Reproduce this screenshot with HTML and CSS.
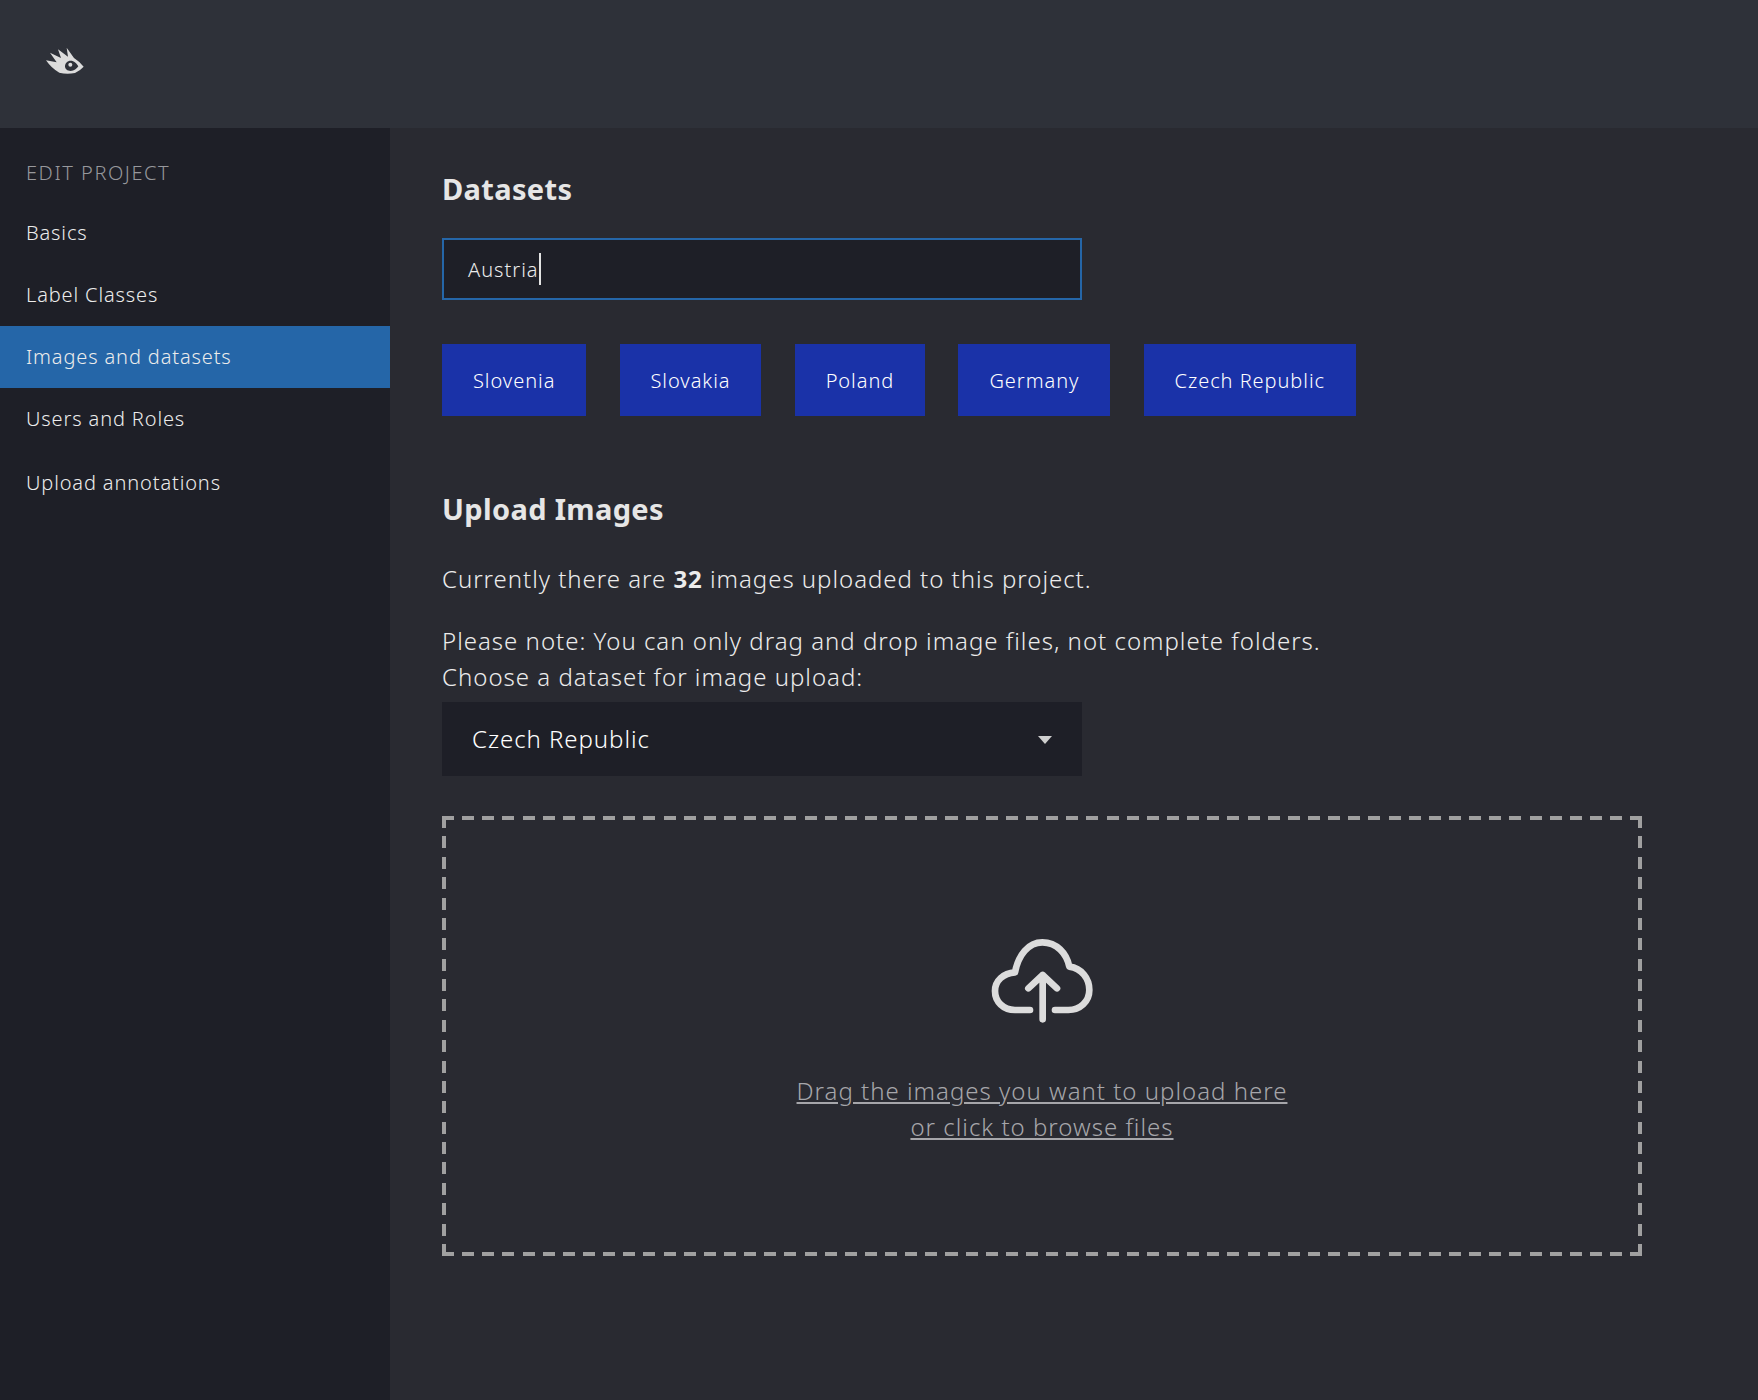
FILE: index.html
```html
<!DOCTYPE html>
<html lang="en">
<head>
<meta charset="utf-8">
<title>Images and datasets</title>
<link rel="stylesheet" href="styles.css">
</head>
<body>
<header class="topbar">
  <svg class="logo" viewBox="0 0 270 180" aria-hidden="true">
    <path fill="#dcdcdc" fill-rule="evenodd" d="M78 97 L110 103 L90 74 L123 90 L114 64 L144 86 L140 59 L162 90 Q178 100 191 116 Q180 128 165 135 Q140 140 118 134 Q95 122 78 97 Z M152 98 C142 98 135 106 135 115 C135 123 142 129 152 129 C162 129 170 123 175 115 C170 106 162 98 152 98 Z"/>
    <circle cx="151" cy="110" r="6" fill="#dcdcdc"/>
  </svg>
</header>
<div class="layout">
  <nav class="sidebar">
    <div class="side-title">EDIT PROJECT</div>
    <a class="side-item">Basics</a>
    <a class="side-item">Label Classes</a>
    <a class="side-item active">Images and datasets</a>
    <a class="side-item">Users and Roles</a>
    <a class="side-item last">Upload annotations</a>
  </nav>
  <main class="content">
    <h2 class="heading first">Datasets</h2>
    <div class="text-input"><span>Austria</span><span class="caret"></span></div>
    <div class="chips">
      <button class="chip">Slovenia</button>
      <button class="chip">Slovakia</button>
      <button class="chip">Poland</button>
      <button class="chip">Germany</button>
      <button class="chip">Czech Republic</button>
    </div>
    <h2 class="heading second">Upload Images</h2>
    <p class="para count">Currently there are <b>32</b> images uploaded to this project.</p>
    <p class="para">Please note: You can only drag and drop image files, not complete folders.</p>
    <p class="para">Choose a dataset for image upload:</p>
    <div class="select"><span>Czech Republic</span><i class="arrow"></i></div>
    <div class="dropzone">
      <svg class="cloud" viewBox="0 0 480 390" aria-hidden="true">
        <path d="M210 300 H165 C130 300 105 275 105 243 C105 212 130 190 165 187 C175 135 205 97 247 97 C290 97 320 130 328 170 C365 175 388 205 388 240 C388 275 360 300 325 300 H285"/>
        <path d="M248 328 V195 M205 235 L248 195 L291 235"/>
      </svg>
      <div class="drop-text"><u>Drag the images you want to upload here</u><br><u>or click to browse files</u></div>
    </div>
  </main>
</div>
</body>
</html>
```
FILE: styles.css
```css
* { box-sizing: border-box; }
html, body { margin: 0; height: 100%; }
body {
  display: flex;
  flex-direction: column;
  height: 1400px;
  overflow: hidden;
  background: #292a31;
  color: #ececec;
  font-family: "Noto Sans", "Open Sans", sans-serif;
  font-weight: 300;
}
.topbar {
  height: 128px;
  flex: none;
  background: #2e3139;
  display: flex;
  align-items: center;
  padding: 0 0 0 20px;
}
.logo { width: 90px; height: 60px; margin-top: -12px; }
.layout { flex: 1; display: flex; }
.sidebar {
  width: 390px;
  flex: none;
  background: #1e1f27;
  padding-top: 27px;
  font-size: 20px;
  letter-spacing: 0.87px;
}
.side-title { color: #97989c; height: 47px; line-height: 36px; padding-left: 26px; letter-spacing: 1.55px; }
.side-item { display: block; height: 62px; line-height: 62px; padding-left: 26px; color: #ececec; }
.side-item.active { background: #2566a8; }
.side-item.last { height: 64px; line-height: 66px; }
.content { flex: 1; padding: 0 116px 0 52px; }
.heading { margin: 0; font-weight: 700; font-size: 29px; line-height: 40px; color: #e6e6e6; letter-spacing: 0.35px; }
.heading.first { margin-top: 41px; }
.heading.second { margin-top: 73px; }
.text-input {
  margin-top: 29px;
  width: 640px;
  height: 62px;
  display: flex;
  align-items: center;
  padding-left: 24px;
  background: #1e1f27;
  border: 2px solid #2566a8;
  font-size: 20px;
  letter-spacing: 1px;
}
.caret { width: 2px; height: 32px; background: #e3e3e3; }
.chips { margin-top: 44px; display: flex; gap: 33.2px; }
.chip {
  height: 72px;
  padding: 0 31px;
  border: 0;
  background: #1a32a8;
  color: #fff;
  font: inherit;
  font-size: 20px;
  letter-spacing: 0.95px;
}
.para { margin: 0; font-size: 24px; line-height: 36px; letter-spacing: 1px; }
.para b { font-weight: 700; }
.para.count { margin: 32px 0 26px; letter-spacing: 0.97px; }
.select {
  margin-top: 7px;
  width: 640px;
  height: 74px;
  display: flex;
  align-items: center;
  justify-content: space-between;
  padding: 0 30px 2px;
  background: #1e1f27;
  color: #fff;
  font-size: 24px;
  letter-spacing: 0.95px;
}
.arrow { width: 0; height: 0; margin-top: 4px; border: 7px solid transparent; border-top: 8px solid #cfcfcf; border-bottom: 0; }
.dropzone {
  margin-top: 40px;
  width: 1200px;
  height: 440px;
  display: flex;
  flex-direction: column;
  align-items: center;
  padding-top: 95px;
  color: #a6a6aa;
  background-color: transparent;
  background-image:
    repeating-linear-gradient(90deg, #a0a0a0 0 12px, transparent 12px 20.14px),
    repeating-linear-gradient(90deg, #a0a0a0 0 12px, transparent 12px 20.14px),
    repeating-linear-gradient(180deg, #a0a0a0 0 12px, transparent 12px 20.38px),
    repeating-linear-gradient(180deg, #a0a0a0 0 12px, transparent 12px 20.38px);
  background-size: 100% 4px, 100% 4px, 4px 100%, 4px 100%;
  background-position: 0 0, 0 100%, 0 0, 100% 0;
  background-repeat: no-repeat;
}
.cloud { width: 160px; height: 130px; flex: none; margin-right: 4px; margin-top: -1px; }
.cloud path { fill: none; stroke: #dcdcdc; stroke-width: 20; stroke-linecap: round; stroke-linejoin: round; }
.drop-text { margin-top: 33px; font-size: 24px; line-height: 36px; text-align: center; letter-spacing: 1px; }
```
